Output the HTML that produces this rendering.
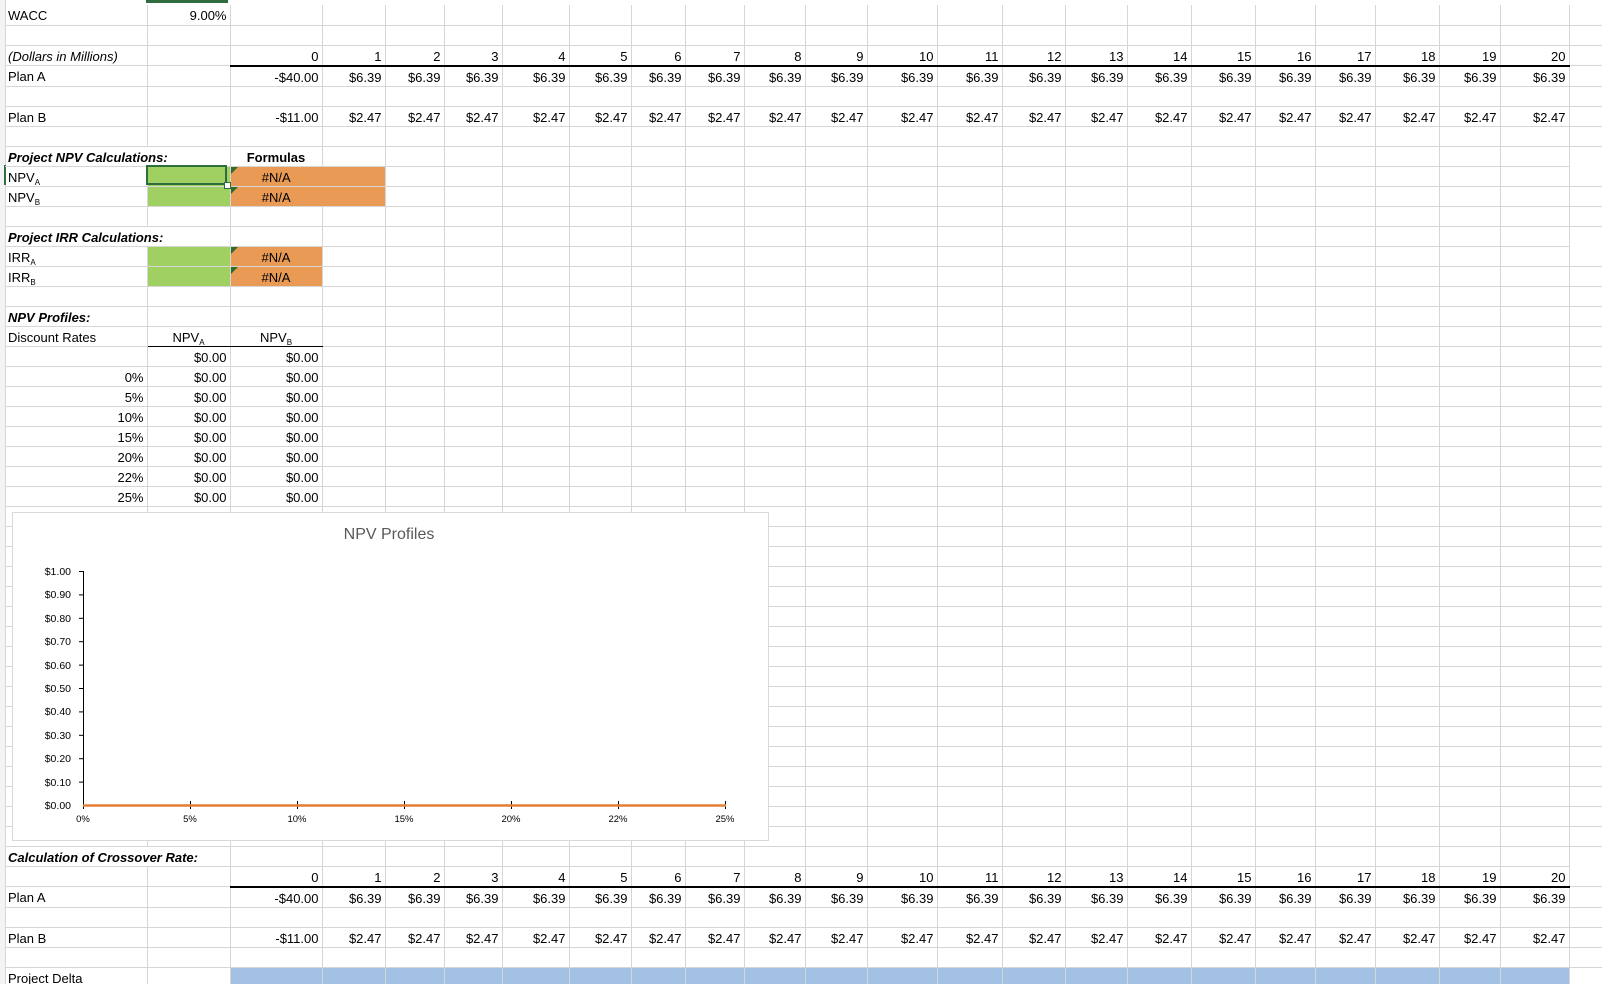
<!DOCTYPE html>
<html><head><meta charset="utf-8"><style>
html,body{margin:0;padding:0;background:#fff;width:1602px;height:984px;overflow:hidden}
body{font-family:"Liberation Sans",Arial,sans-serif;font-size:13px;color:#000;position:relative}
table{position:absolute;left:5px;top:5px;border-collapse:collapse;table-layout:fixed;width:1597px}
tr{height:20px}
td{height:20px;max-height:20px;padding:2px 3px 0 3px;border-right:1px solid #d6d6d6;border-bottom:1px solid #d6d6d6;text-align:right;white-space:nowrap;overflow:visible;line-height:17px;box-sizing:border-box}
td.l{text-align:left}
td.c{text-align:center}
td.i{font-style:italic}
td.bi{font-style:italic;font-weight:bold}
tr.h td.u{border-bottom:2px solid #000}
.g{background:#a0cf62}
.o{background:#e99b55;text-align:center;position:relative}
.b{background:#a2c1e3}
sub{font-size:8px;vertical-align:baseline;position:relative;top:3px;line-height:0}
.tri{position:absolute;left:0;top:0;width:0;height:0;border-top:7px solid #2f6b2a;border-right:7px solid transparent}
.sel{position:absolute;left:146px;top:165px;width:81px;height:20px;border:2px solid #2e6e3e;box-sizing:border-box}
.hdl{position:absolute;left:224px;top:182px;width:5px;height:5px;background:#fff;border:1px solid #2e6e3e}
.chart{position:absolute;left:12px;top:512px;width:757px;height:329px;background:#fff;border:1px solid #d9d9d9;box-sizing:border-box}
</style></head><body>
<div style="position:absolute;left:146px;top:0;width:82px;height:3px;background:#2e6e3e"></div>
<div style="position:absolute;left:0;top:0;width:5px;height:984px;background:#f3f3f3;border-right:1px solid #d6d6d6"></div>
<div style="position:absolute;left:4px;top:165px;width:2px;height:20px;background:#2e6e3e"></div>
<table>
<colgroup><col style="width:142px"><col style="width:83px"><col style="width:92px"><col style="width:63px"><col style="width:59px"><col style="width:58px"><col style="width:67px"><col style="width:62px"><col style="width:54px"><col style="width:59px"><col style="width:61px"><col style="width:62px"><col style="width:70px"><col style="width:65px"><col style="width:63px"><col style="width:62px"><col style="width:64px"><col style="width:64px"><col style="width:60px"><col style="width:60px"><col style="width:64px"><col style="width:61px"><col style="width:69px"><col style="width:33px"></colgroup>
<tr><td class="l">WACC</td><td>9.00%</td><td></td><td></td><td></td><td></td><td></td><td></td><td></td><td></td><td></td><td></td><td></td><td></td><td></td><td></td><td></td><td></td><td></td><td></td><td></td><td></td><td></td><td></td></tr>
<tr><td></td><td></td><td></td><td></td><td></td><td></td><td></td><td></td><td></td><td></td><td></td><td></td><td></td><td></td><td></td><td></td><td></td><td></td><td></td><td></td><td></td><td></td><td></td><td></td></tr>
<tr class="h"><td class="l i">(Dollars in Millions)</td><td></td><td class="u">0</td><td class="u">1</td><td class="u">2</td><td class="u">3</td><td class="u">4</td><td class="u">5</td><td class="u">6</td><td class="u">7</td><td class="u">8</td><td class="u">9</td><td class="u">10</td><td class="u">11</td><td class="u">12</td><td class="u">13</td><td class="u">14</td><td class="u">15</td><td class="u">16</td><td class="u">17</td><td class="u">18</td><td class="u">19</td><td class="u">20</td><td></td></tr>
<tr><td class="l">Plan A</td><td></td><td>-$40.00</td><td>$6.39</td><td>$6.39</td><td>$6.39</td><td>$6.39</td><td>$6.39</td><td>$6.39</td><td>$6.39</td><td>$6.39</td><td>$6.39</td><td>$6.39</td><td>$6.39</td><td>$6.39</td><td>$6.39</td><td>$6.39</td><td>$6.39</td><td>$6.39</td><td>$6.39</td><td>$6.39</td><td>$6.39</td><td>$6.39</td><td></td></tr>
<tr><td></td><td></td><td></td><td></td><td></td><td></td><td></td><td></td><td></td><td></td><td></td><td></td><td></td><td></td><td></td><td></td><td></td><td></td><td></td><td></td><td></td><td></td><td></td><td></td></tr>
<tr><td class="l">Plan B</td><td></td><td>-$11.00</td><td>$2.47</td><td>$2.47</td><td>$2.47</td><td>$2.47</td><td>$2.47</td><td>$2.47</td><td>$2.47</td><td>$2.47</td><td>$2.47</td><td>$2.47</td><td>$2.47</td><td>$2.47</td><td>$2.47</td><td>$2.47</td><td>$2.47</td><td>$2.47</td><td>$2.47</td><td>$2.47</td><td>$2.47</td><td>$2.47</td><td></td></tr>
<tr><td></td><td></td><td></td><td></td><td></td><td></td><td></td><td></td><td></td><td></td><td></td><td></td><td></td><td></td><td></td><td></td><td></td><td></td><td></td><td></td><td></td><td></td><td></td><td></td></tr>
<tr><td class="l bi" colspan="2">Project NPV Calculations:</td><td class="c" style="font-weight:bold">Formulas</td><td></td><td></td><td></td><td></td><td></td><td></td><td></td><td></td><td></td><td></td><td></td><td></td><td></td><td></td><td></td><td></td><td></td><td></td><td></td><td></td></tr>
<tr><td class="l">NPV<sub>A</sub></td><td class="g"></td><td class="o" style="border-right:none"><span class="tri"></span>#N/A</td><td class="o"></td><td></td><td></td><td></td><td></td><td></td><td></td><td></td><td></td><td></td><td></td><td></td><td></td><td></td><td></td><td></td><td></td><td></td><td></td><td></td><td></td></tr>
<tr><td class="l">NPV<sub>B</sub></td><td class="g"></td><td class="o" style="border-right:none"><span class="tri"></span>#N/A</td><td class="o"></td><td></td><td></td><td></td><td></td><td></td><td></td><td></td><td></td><td></td><td></td><td></td><td></td><td></td><td></td><td></td><td></td><td></td><td></td><td></td><td></td></tr>
<tr><td></td><td></td><td></td><td></td><td></td><td></td><td></td><td></td><td></td><td></td><td></td><td></td><td></td><td></td><td></td><td></td><td></td><td></td><td></td><td></td><td></td><td></td><td></td><td></td></tr>
<tr><td class="l bi" colspan="2">Project IRR Calculations:</td><td></td><td></td><td></td><td></td><td></td><td></td><td></td><td></td><td></td><td></td><td></td><td></td><td></td><td></td><td></td><td></td><td></td><td></td><td></td><td></td><td></td></tr>
<tr><td class="l">IRR<sub>A</sub></td><td class="g"></td><td class="o"><span class="tri"></span>#N/A</td><td></td><td></td><td></td><td></td><td></td><td></td><td></td><td></td><td></td><td></td><td></td><td></td><td></td><td></td><td></td><td></td><td></td><td></td><td></td><td></td><td></td></tr>
<tr><td class="l">IRR<sub>B</sub></td><td class="g"></td><td class="o"><span class="tri"></span>#N/A</td><td></td><td></td><td></td><td></td><td></td><td></td><td></td><td></td><td></td><td></td><td></td><td></td><td></td><td></td><td></td><td></td><td></td><td></td><td></td><td></td><td></td></tr>
<tr><td></td><td></td><td></td><td></td><td></td><td></td><td></td><td></td><td></td><td></td><td></td><td></td><td></td><td></td><td></td><td></td><td></td><td></td><td></td><td></td><td></td><td></td><td></td><td></td></tr>
<tr><td class="l bi">NPV Profiles:</td><td></td><td></td><td></td><td></td><td></td><td></td><td></td><td></td><td></td><td></td><td></td><td></td><td></td><td></td><td></td><td></td><td></td><td></td><td></td><td></td><td></td><td></td><td></td></tr>
<tr><td class="l">Discount Rates</td><td class="c" style="border-bottom:1px solid #000">NPV<sub>A</sub></td><td class="c" style="border-bottom:1px solid #000">NPV<sub>B</sub></td><td></td><td></td><td></td><td></td><td></td><td></td><td></td><td></td><td></td><td></td><td></td><td></td><td></td><td></td><td></td><td></td><td></td><td></td><td></td><td></td><td></td></tr>
<tr><td></td><td>$0.00</td><td>$0.00</td><td></td><td></td><td></td><td></td><td></td><td></td><td></td><td></td><td></td><td></td><td></td><td></td><td></td><td></td><td></td><td></td><td></td><td></td><td></td><td></td><td></td></tr>
<tr><td>0%</td><td>$0.00</td><td>$0.00</td><td></td><td></td><td></td><td></td><td></td><td></td><td></td><td></td><td></td><td></td><td></td><td></td><td></td><td></td><td></td><td></td><td></td><td></td><td></td><td></td><td></td></tr>
<tr><td>5%</td><td>$0.00</td><td>$0.00</td><td></td><td></td><td></td><td></td><td></td><td></td><td></td><td></td><td></td><td></td><td></td><td></td><td></td><td></td><td></td><td></td><td></td><td></td><td></td><td></td><td></td></tr>
<tr><td>10%</td><td>$0.00</td><td>$0.00</td><td></td><td></td><td></td><td></td><td></td><td></td><td></td><td></td><td></td><td></td><td></td><td></td><td></td><td></td><td></td><td></td><td></td><td></td><td></td><td></td><td></td></tr>
<tr><td>15%</td><td>$0.00</td><td>$0.00</td><td></td><td></td><td></td><td></td><td></td><td></td><td></td><td></td><td></td><td></td><td></td><td></td><td></td><td></td><td></td><td></td><td></td><td></td><td></td><td></td><td></td></tr>
<tr><td>20%</td><td>$0.00</td><td>$0.00</td><td></td><td></td><td></td><td></td><td></td><td></td><td></td><td></td><td></td><td></td><td></td><td></td><td></td><td></td><td></td><td></td><td></td><td></td><td></td><td></td><td></td></tr>
<tr><td>22%</td><td>$0.00</td><td>$0.00</td><td></td><td></td><td></td><td></td><td></td><td></td><td></td><td></td><td></td><td></td><td></td><td></td><td></td><td></td><td></td><td></td><td></td><td></td><td></td><td></td><td></td></tr>
<tr><td>25%</td><td>$0.00</td><td>$0.00</td><td></td><td></td><td></td><td></td><td></td><td></td><td></td><td></td><td></td><td></td><td></td><td></td><td></td><td></td><td></td><td></td><td></td><td></td><td></td><td></td><td></td></tr>
<tr><td></td><td></td><td></td><td></td><td></td><td></td><td></td><td></td><td></td><td></td><td></td><td></td><td></td><td></td><td></td><td></td><td></td><td></td><td></td><td></td><td></td><td></td><td></td><td></td></tr>
<tr><td></td><td></td><td></td><td></td><td></td><td></td><td></td><td></td><td></td><td></td><td></td><td></td><td></td><td></td><td></td><td></td><td></td><td></td><td></td><td></td><td></td><td></td><td></td><td></td></tr>
<tr><td></td><td></td><td></td><td></td><td></td><td></td><td></td><td></td><td></td><td></td><td></td><td></td><td></td><td></td><td></td><td></td><td></td><td></td><td></td><td></td><td></td><td></td><td></td><td></td></tr>
<tr><td></td><td></td><td></td><td></td><td></td><td></td><td></td><td></td><td></td><td></td><td></td><td></td><td></td><td></td><td></td><td></td><td></td><td></td><td></td><td></td><td></td><td></td><td></td><td></td></tr>
<tr><td></td><td></td><td></td><td></td><td></td><td></td><td></td><td></td><td></td><td></td><td></td><td></td><td></td><td></td><td></td><td></td><td></td><td></td><td></td><td></td><td></td><td></td><td></td><td></td></tr>
<tr><td></td><td></td><td></td><td></td><td></td><td></td><td></td><td></td><td></td><td></td><td></td><td></td><td></td><td></td><td></td><td></td><td></td><td></td><td></td><td></td><td></td><td></td><td></td><td></td></tr>
<tr><td></td><td></td><td></td><td></td><td></td><td></td><td></td><td></td><td></td><td></td><td></td><td></td><td></td><td></td><td></td><td></td><td></td><td></td><td></td><td></td><td></td><td></td><td></td><td></td></tr>
<tr><td></td><td></td><td></td><td></td><td></td><td></td><td></td><td></td><td></td><td></td><td></td><td></td><td></td><td></td><td></td><td></td><td></td><td></td><td></td><td></td><td></td><td></td><td></td><td></td></tr>
<tr><td></td><td></td><td></td><td></td><td></td><td></td><td></td><td></td><td></td><td></td><td></td><td></td><td></td><td></td><td></td><td></td><td></td><td></td><td></td><td></td><td></td><td></td><td></td><td></td></tr>
<tr><td></td><td></td><td></td><td></td><td></td><td></td><td></td><td></td><td></td><td></td><td></td><td></td><td></td><td></td><td></td><td></td><td></td><td></td><td></td><td></td><td></td><td></td><td></td><td></td></tr>
<tr><td></td><td></td><td></td><td></td><td></td><td></td><td></td><td></td><td></td><td></td><td></td><td></td><td></td><td></td><td></td><td></td><td></td><td></td><td></td><td></td><td></td><td></td><td></td><td></td></tr>
<tr><td></td><td></td><td></td><td></td><td></td><td></td><td></td><td></td><td></td><td></td><td></td><td></td><td></td><td></td><td></td><td></td><td></td><td></td><td></td><td></td><td></td><td></td><td></td><td></td></tr>
<tr><td></td><td></td><td></td><td></td><td></td><td></td><td></td><td></td><td></td><td></td><td></td><td></td><td></td><td></td><td></td><td></td><td></td><td></td><td></td><td></td><td></td><td></td><td></td><td></td></tr>
<tr><td></td><td></td><td></td><td></td><td></td><td></td><td></td><td></td><td></td><td></td><td></td><td></td><td></td><td></td><td></td><td></td><td></td><td></td><td></td><td></td><td></td><td></td><td></td><td></td></tr>
<tr><td></td><td></td><td></td><td></td><td></td><td></td><td></td><td></td><td></td><td></td><td></td><td></td><td></td><td></td><td></td><td></td><td></td><td></td><td></td><td></td><td></td><td></td><td></td><td></td></tr>
<tr><td></td><td></td><td></td><td></td><td></td><td></td><td></td><td></td><td></td><td></td><td></td><td></td><td></td><td></td><td></td><td></td><td></td><td></td><td></td><td></td><td></td><td></td><td></td><td></td></tr>
<tr><td></td><td></td><td></td><td></td><td></td><td></td><td></td><td></td><td></td><td></td><td></td><td></td><td></td><td></td><td></td><td></td><td></td><td></td><td></td><td></td><td></td><td></td><td></td><td></td></tr>
<tr><td class="l bi" colspan="2">Calculation of Crossover Rate:</td><td></td><td></td><td></td><td></td><td></td><td></td><td></td><td></td><td></td><td></td><td></td><td></td><td></td><td></td><td></td><td></td><td></td><td></td><td></td><td></td><td></td></tr>
<tr class="h"><td></td><td></td><td class="u">0</td><td class="u">1</td><td class="u">2</td><td class="u">3</td><td class="u">4</td><td class="u">5</td><td class="u">6</td><td class="u">7</td><td class="u">8</td><td class="u">9</td><td class="u">10</td><td class="u">11</td><td class="u">12</td><td class="u">13</td><td class="u">14</td><td class="u">15</td><td class="u">16</td><td class="u">17</td><td class="u">18</td><td class="u">19</td><td class="u">20</td><td></td></tr>
<tr><td class="l">Plan A</td><td></td><td>-$40.00</td><td>$6.39</td><td>$6.39</td><td>$6.39</td><td>$6.39</td><td>$6.39</td><td>$6.39</td><td>$6.39</td><td>$6.39</td><td>$6.39</td><td>$6.39</td><td>$6.39</td><td>$6.39</td><td>$6.39</td><td>$6.39</td><td>$6.39</td><td>$6.39</td><td>$6.39</td><td>$6.39</td><td>$6.39</td><td>$6.39</td><td></td></tr>
<tr><td></td><td></td><td></td><td></td><td></td><td></td><td></td><td></td><td></td><td></td><td></td><td></td><td></td><td></td><td></td><td></td><td></td><td></td><td></td><td></td><td></td><td></td><td></td><td></td></tr>
<tr><td class="l">Plan B</td><td></td><td>-$11.00</td><td>$2.47</td><td>$2.47</td><td>$2.47</td><td>$2.47</td><td>$2.47</td><td>$2.47</td><td>$2.47</td><td>$2.47</td><td>$2.47</td><td>$2.47</td><td>$2.47</td><td>$2.47</td><td>$2.47</td><td>$2.47</td><td>$2.47</td><td>$2.47</td><td>$2.47</td><td>$2.47</td><td>$2.47</td><td>$2.47</td><td></td></tr>
<tr><td></td><td></td><td></td><td></td><td></td><td></td><td></td><td></td><td></td><td></td><td></td><td></td><td></td><td></td><td></td><td></td><td></td><td></td><td></td><td></td><td></td><td></td><td></td><td></td></tr>
<tr><td class="l">Project Delta</td><td></td><td class="b"></td><td class="b"></td><td class="b"></td><td class="b"></td><td class="b"></td><td class="b"></td><td class="b"></td><td class="b"></td><td class="b"></td><td class="b"></td><td class="b"></td><td class="b"></td><td class="b"></td><td class="b"></td><td class="b"></td><td class="b"></td><td class="b"></td><td class="b"></td><td class="b"></td><td class="b"></td><td class="b"></td><td></td></tr>
</table>
<div class="sel"></div><div class="hdl"></div>
<div class="chart">
<svg width="757" height="329" viewBox="0 0 757 329" xmlns="http://www.w3.org/2000/svg" style="position:absolute;left:-1px;top:-1px" font-family="Liberation Sans, sans-serif">
<text x="377" y="27" font-size="16" fill="#595959" text-anchor="middle">NPV Profiles</text>
<g font-size="10.5" fill="#000" text-anchor="end">
<text x="59" y="63">$1.00</text><text x="59" y="86">$0.90</text><text x="59" y="110">$0.80</text><text x="59" y="133">$0.70</text><text x="59" y="157">$0.60</text><text x="59" y="180">$0.50</text><text x="59" y="203">$0.40</text><text x="59" y="227">$0.30</text><text x="59" y="250">$0.20</text><text x="59" y="274">$0.10</text><text x="59" y="297">$0.00</text>
</g>
<g stroke="#000" stroke-width="1">
<line x1="71.5" y1="59" x2="71.5" y2="293"/>
<line x1="67" y1="59.5" x2="71" y2="59.5"/><line x1="67" y1="82.9" x2="71" y2="82.9"/><line x1="67" y1="106.3" x2="71" y2="106.3"/><line x1="67" y1="129.7" x2="71" y2="129.7"/><line x1="67" y1="153.1" x2="71" y2="153.1"/><line x1="67" y1="176.5" x2="71" y2="176.5"/><line x1="67" y1="199.9" x2="71" y2="199.9"/><line x1="67" y1="223.3" x2="71" y2="223.3"/><line x1="67" y1="246.7" x2="71" y2="246.7"/><line x1="67" y1="270.1" x2="71" y2="270.1"/>
<line x1="71.5" y1="289" x2="71.5" y2="297"/><line x1="178.5" y1="289" x2="178.5" y2="297"/><line x1="285.5" y1="289" x2="285.5" y2="297"/><line x1="392.5" y1="289" x2="392.5" y2="297"/><line x1="499.5" y1="289" x2="499.5" y2="297"/><line x1="606.5" y1="289" x2="606.5" y2="297"/><line x1="713.5" y1="289" x2="713.5" y2="297"/>
</g>
<line x1="71" y1="293.5" x2="714" y2="293.5" stroke="#e67e36" stroke-width="2.5"/>
<g font-size="9.5" fill="#000" text-anchor="middle">
<text x="71" y="310">0%</text><text x="178" y="310">5%</text><text x="285" y="310">10%</text><text x="392" y="310">15%</text><text x="499" y="310">20%</text><text x="606" y="310">22%</text><text x="713" y="310">25%</text>
</g>
</svg>
</div>
</body></html>
